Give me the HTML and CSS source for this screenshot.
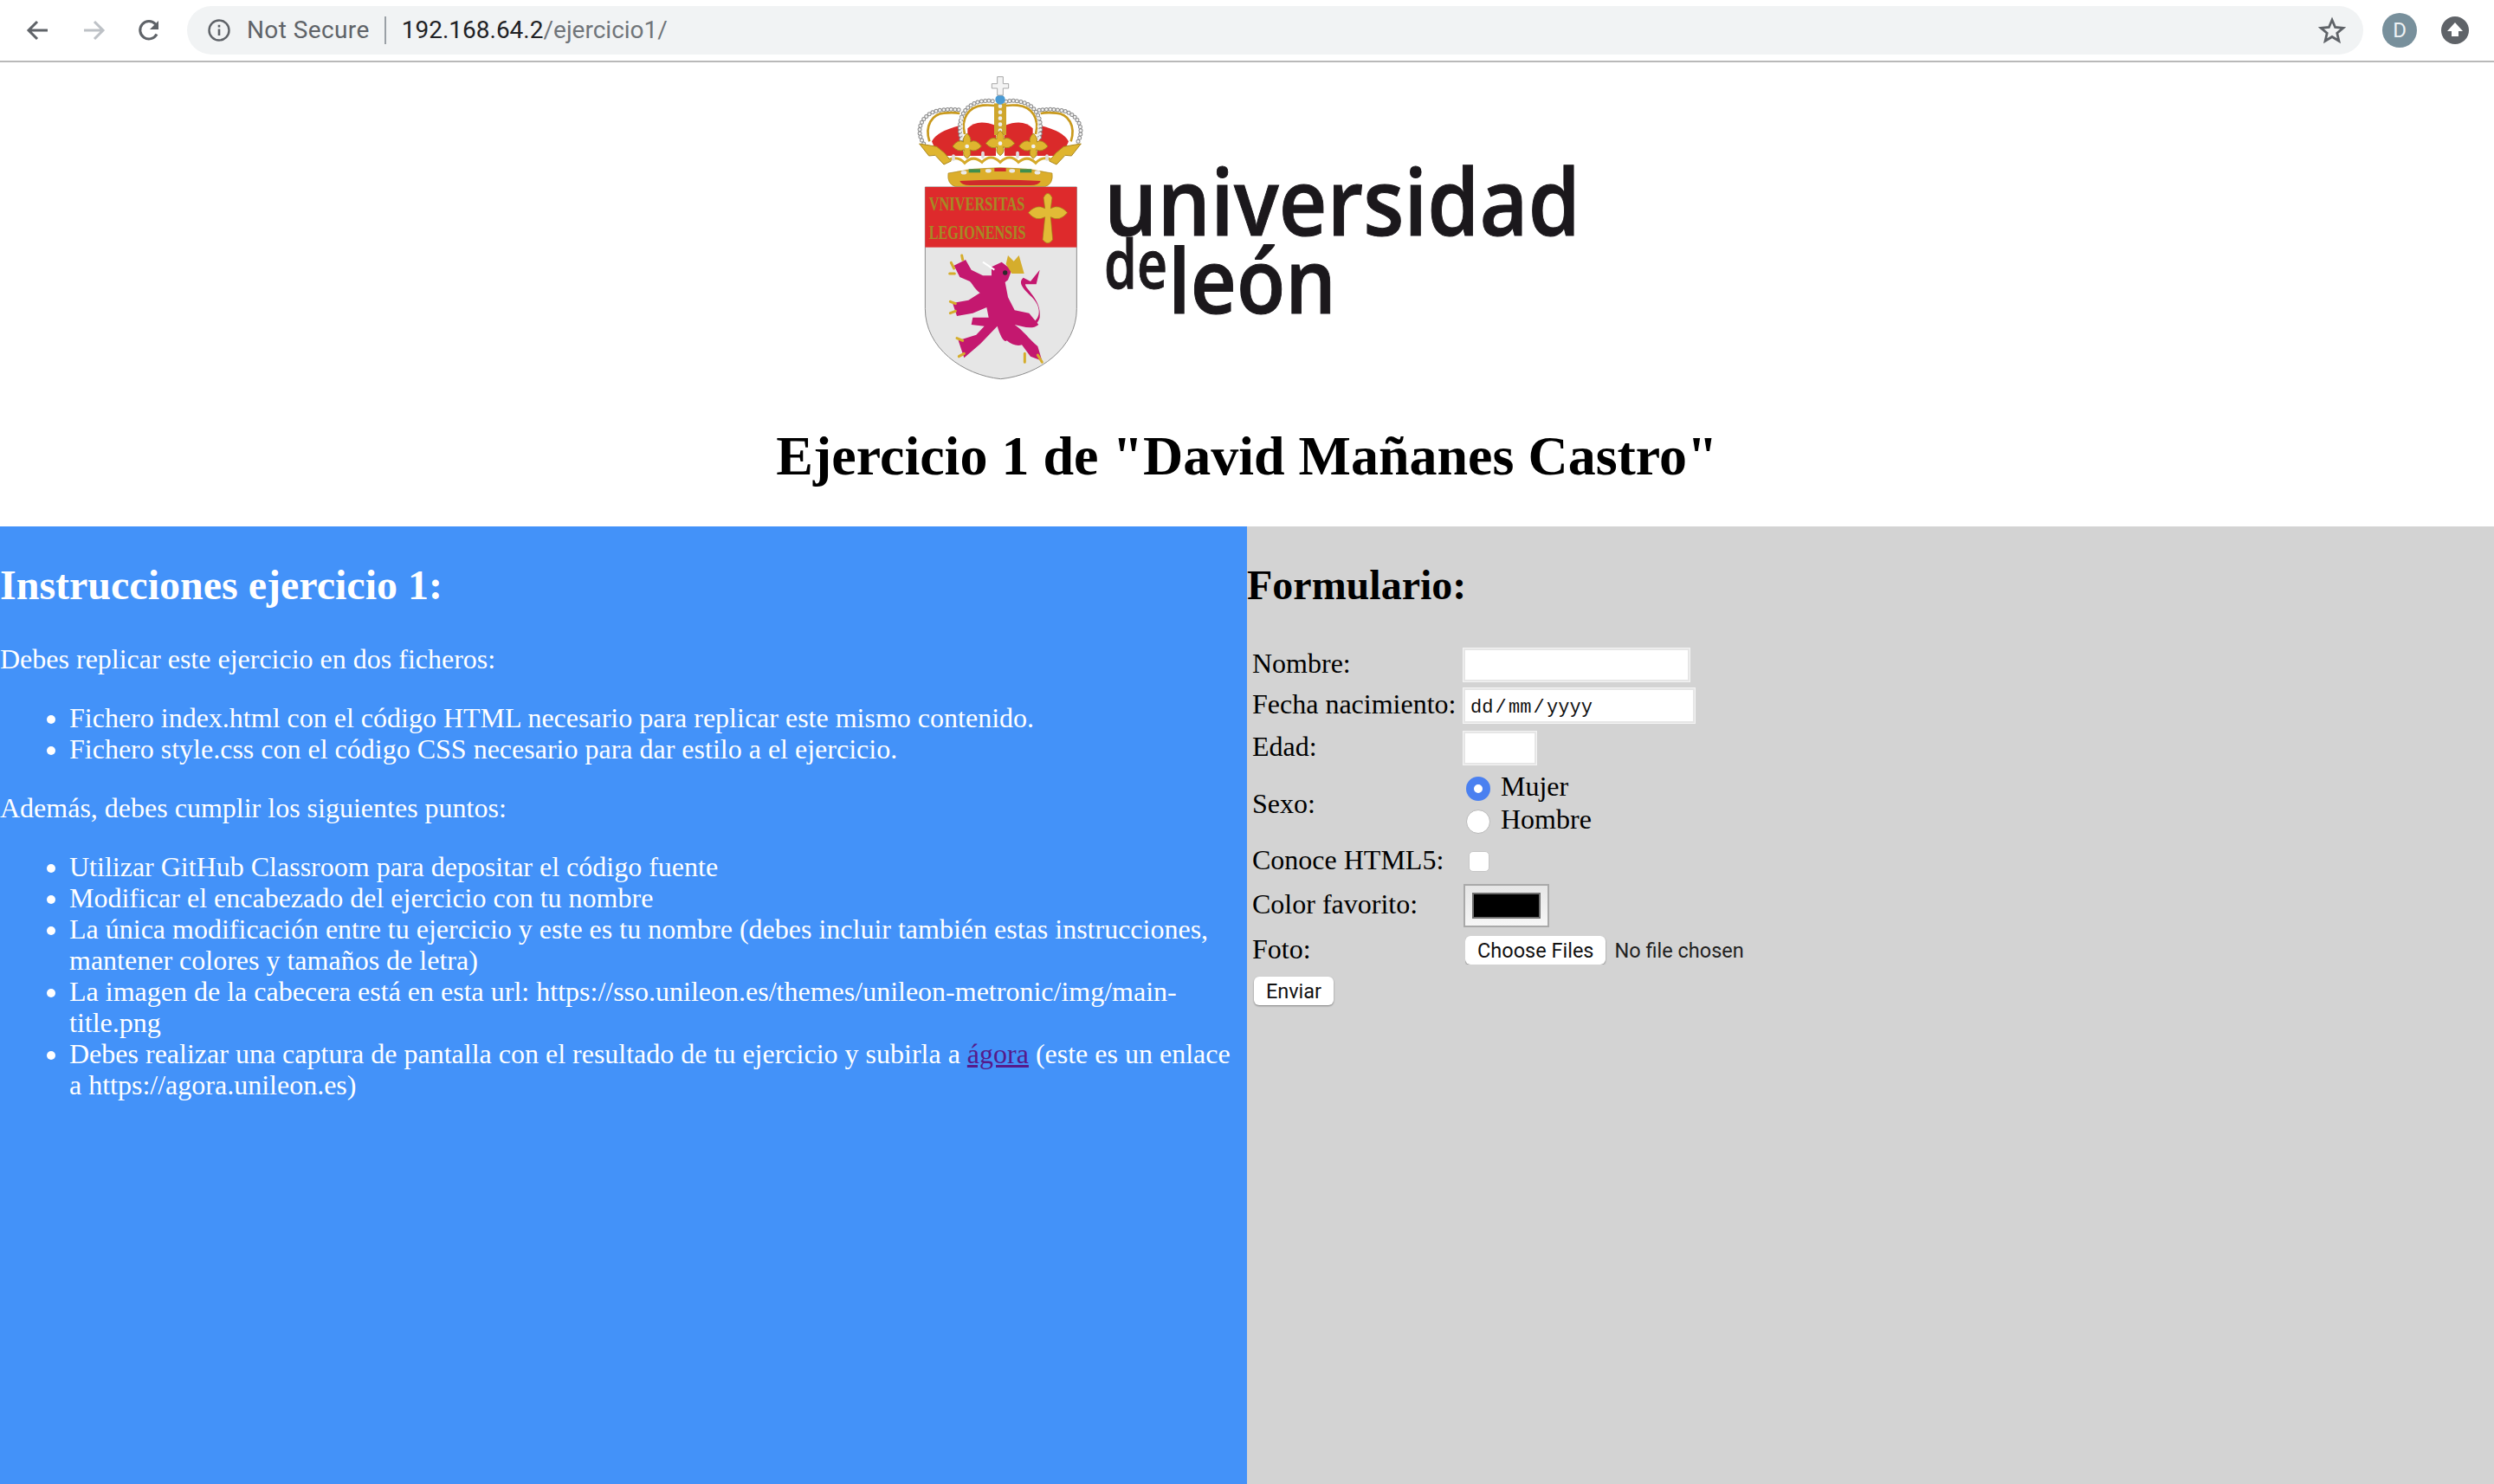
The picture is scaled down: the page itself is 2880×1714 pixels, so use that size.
FILE: index.html
```html
<!DOCTYPE html>
<html lang="es">
<head>
    <meta charset="UTF-8">
    <meta name="viewport" content="width=device-width, initial-scale=1.0">
    <title>Ejercicio 1</title>
    <link rel="stylesheet" href="styles.css">
</head>
<body>
    <div class="toolbar">
        <svg class="navIcon" viewBox="0 0 32 32"><path d="M27 16H6M15 6 5 16l10 10" fill="none" stroke="#5f6368" stroke-width="3"/></svg>
        <svg class="navIcon" viewBox="0 0 32 32"><path d="M5 16h21M17 6l10 10-10 10" fill="none" stroke="#bdc1c6" stroke-width="3"/></svg>
        <svg class="navIcon" viewBox="0 0 32 32"><path d="M25 20.5A10.2 10.2 0 1 1 23.6 9" fill="none" stroke="#5f6368" stroke-width="3"/><path d="M27 5v10H17z" fill="#5f6368"/></svg>
        <div class="addressBar">
            <svg class="infoIcon" viewBox="0 0 28 28"><circle cx="14" cy="14" r="11.5" fill="none" stroke="#5f6368" stroke-width="2.4"/><path d="M12.7 12.5h2.6V20h-2.6zM12.7 7.8h2.6v2.6h-2.6z" fill="#5f6368"/></svg>
            <span class="secure">Not Secure</span>
            <span class="urlText">192.168.64.2<span class="urlPath">/ejercicio1/</span></span>
            <svg class="starIcon" viewBox="0 0 32 32"><path d="m16 4 3.6 8.5 9.2.8-7 6 2.1 9L16 23.500l-7.900 4.800 2.100-9-7-6 9.200-.8z" fill="none" stroke="#5f6368" stroke-width="2.8"/></svg>
        </div>
        <span class="avatar">D</span>
        <svg class="updateIcon" viewBox="0 0 32 32"><circle cx="16" cy="16" r="16" fill="#5f6368"/><path d="m16 7 9 10h-5v6h-8v-6H7z" fill="#fff"/></svg>
    </div>

    <header class="top">
        <svg class="logo" viewBox="1050 80 790 370" role="img" aria-label="Universidad de León">
            <defs>
                <g id="fleur">
                    <path d="M0-45Q16-30 12-15Q30-27 50 0Q30 22 10 12Q18 30 0 42Q-18 30-10 12Q-30 22-50 0Q-30-27-12-15Q-16-30 0-45Z" fill="#dfb52f" stroke="#a9861d" stroke-width="3"/>
                    <circle r="7" fill="#f1f1f1"/>
                </g>
                <path id="pearlArcs" d="M80 258C45 205 80 150 135 142C165 138 190 138 210 142M210 242C195 180 215 125 275 112C295 108 310 108 325 112M365 112C380 108 395 108 415 112C475 125 495 180 480 242M480 142C500 138 525 138 555 142C610 150 645 205 610 258"/>
            </defs>
            <g transform="translate(1040 80) scale(.33333)">
                <!-- crown: red cap between the arches -->
                <path d="M108 250Q125 215 205 195L218 300H130Z" fill="#da2a2a"/>
                <path d="M232 205Q265 170 330 195V300H232Z" fill="#da2a2a"/>
                <path d="M360 195Q425 170 458 205V300H360Z" fill="#da2a2a"/>
                <path d="M582 250Q565 215 485 195L472 300H560Z" fill="#da2a2a"/>
                <use href="#pearlArcs" fill="none" stroke="#8d8d8d" stroke-width="15" stroke-linecap="round" stroke-dasharray="0 13"/>
                <use href="#pearlArcs" fill="none" stroke="#f4f4f4" stroke-width="9" stroke-linecap="round" stroke-dasharray="0 13"/>
                <path d="M100 250C82 195 110 155 150 152C170 150 190 150 205 153M222 225C208 170 235 130 285 125C300 124 312 124 325 126M365 126C378 124 390 124 405 125C455 130 482 170 468 225M485 153C500 150 520 150 540 152C580 155 608 195 590 250" fill="none" stroke="#c99a1d" stroke-width="8"/>
                <rect x="324" y="118" width="42" height="110" fill="#cfa62c"/>
                <path d="M345 128V215" stroke="#ececec" stroke-width="14" stroke-linecap="round" stroke-dasharray="0 21" fill="none"/>
                <path d="M212 170V252M478 170V252" stroke="#ececec" stroke-width="10" stroke-linecap="round" stroke-dasharray="0 14" fill="none"/>
                <!-- rim: outer leaves and scallops -->
                <path d="M65 258 125 268 152 290 175 318 150 330 120 298 98 300Z" fill="#dfb52f" stroke="#a9861d" stroke-width="3"/>
                <path d="M625 258 565 268 538 290 515 318 540 330 570 298 592 300Z" fill="#dfb52f" stroke="#a9861d" stroke-width="3"/>
                <path d="M170 312Q200 300 222 325Q250 295 282 322Q312 290 345 322Q378 290 408 322Q440 295 468 325Q490 300 520 312" fill="none" stroke="#d5aa2a" stroke-width="9"/>
                <path d="M183 300V312M285 290V304M405 290V304M507 300V312" stroke="#dedede" stroke-width="11" stroke-linecap="round" fill="none"/>
                <use href="#fleur" x="230" y="267"/>
                <use href="#fleur" x="345" y="257"/>
                <use href="#fleur" x="460" y="267"/>
                <path d="M165 360Q345 322 525 360Q530 398 500 407H190Q160 398 165 360Z" fill="#dcae2b" stroke="#a9861d" stroke-width="2"/>
                <rect x="236" y="346" width="40" height="12" fill="#3f8f4d"/>
                <rect x="325" y="342" width="40" height="12" fill="#cf2b2b"/>
                <rect x="414" y="346" width="40" height="12" fill="#3f8f4d"/>
                <path d="M215 358h8M300 352h8M382 352h8M470 358h8" stroke="#eaeaea" stroke-width="13" stroke-linecap="round" fill="none"/>
                <path d="M205 387Q345 378 485 387Q480 402 450 402H240Q210 402 205 387Z" fill="#cf2b2b"/>
                <circle cx="345" cy="105" r="17" fill="#4a9bd4"/>
                <path d="M335 90V66H316V50H335V26H355V50H374V66H355V90Z" fill="#f4f4f4" stroke="#a7a7a7" stroke-width="3"/>
                <!-- shield -->
                <path d="M85 408H610V830C610 965 480 1060 347 1073C215 1060 85 965 85 830Z" fill="#e6e6e6" stroke="#8c8c8c" stroke-width="3"/>
                <rect x="85" y="408" width="525" height="209" fill="#de2a2c"/>
                <text class="shieldText" x="98" y="488" textLength="332" lengthAdjust="spacingAndGlyphs">VNIVERSITAS</text>
                <text class="shieldText" x="98" y="588" textLength="336" lengthAdjust="spacingAndGlyphs">LEGIONENSIS</text>
                <path d="M495 445Q510 415 525 445L520 482Q550 465 578 497Q550 530 520 512L527 590Q510 615 492 590L500 512Q470 530 442 497Q470 465 500 482Z" fill="#e2bb36" stroke="#9b7a18" stroke-width="2"/>
                <!-- lion -->
                <path d="M315 685 350 668 385 695 372 730 362 738 372 790 395 835 445 845 478 885C455 905 420 890 395 885 425 905 445 935 475 960L490 1010 450 995 420 955C405 960 385 955 368 940 360 950 345 925 335 890 310 915 285 945 255 970L220 1000 200 940 262 920 290 890 245 885 250 860 305 860 298 825 250 845 195 855 180 810 235 800 275 775C255 760 250 745 240 735L205 720 185 680 225 660 245 695 285 715 315 715Z" fill="#c4186f"/>
                <path d="M455 880C490 860 485 820 455 790C425 760 405 740 425 722L450 735 482 695 470 745 432 745C430 760 490 800 482 860 475 885 455 895 440 880Z" fill="#c4186f"/>
                <path d="M365 675 372 645 392 665 410 645 428 708 385 708Z" fill="#d5ad2c"/>
                <path d="M285 668 325 695" stroke="#fff" stroke-width="6" fill="none"/>
                <circle cx="362" cy="705" r="8" fill="#2b2b2b"/>
                <path d="M185 690 175 670M187 708 170 708M190 812 172 805M190 838 172 845M215 940 195 932M220 985 202 995M430 985 430 1015M475 990 490 1015M215 660 212 645" stroke="#d5ad2c" stroke-width="9" stroke-linecap="round" fill="none"/>
            </g>
            <g class="logoWord">
                <text x="1275" y="272" font-size="107" textLength="550" lengthAdjust="spacingAndGlyphs">universidad</text>
                <text x="1275" y="333" font-size="78" textLength="73" lengthAdjust="spacingAndGlyphs">de</text>
                <text x="1349" y="362" font-size="104" textLength="194" lengthAdjust="spacingAndGlyphs">león</text>
            </g>
        </svg>
        <h1>Ejercicio 1 de "David Mañanes Castro"</h1>
    </header>

    <main class="content">
        <section class="instructions">
            <h2>Instrucciones ejercicio 1:</h2>
            <p>Debes replicar este ejercicio en dos ficheros:</p>
            <ul>
                <li>Fichero index.html con el código HTML necesario para replicar este mismo contenido.</li>
                <li>Fichero style.css con el código CSS necesario para dar estilo a el ejercicio.</li>
            </ul>
            <p>Además, debes cumplir los siguientes puntos:</p>
            <ul>
                <li>Utilizar GitHub Classroom para depositar el código fuente</li>
                <li>Modificar el encabezado del ejercicio con tu nombre</li>
                <li>La única modificación entre tu ejercicio y este es tu nombre (debes incluir también estas instrucciones, mantener colores y tamaños de letra)</li>
                <li>La imagen de la cabecera está en esta url: https://sso.unileon.es/themes/unileon-metronic/img/main-title.png</li>
                <li>Debes realizar una captura de pantalla con el resultado de tu ejercicio y subirla a <a href="#">ágora</a> (este es un enlace a https://agora.unileon.es)</li>
            </ul>
        </section>
        <section class="formPanel">
            <h2>Formulario:</h2>
            <form>
                <table>
                    <tr><td class="labelCell">Nombre:</td><td><input class="field nameField" type="text"></td></tr>
                    <tr><td class="labelCell">Fecha nacimiento:</td><td><input class="field dateField" type="text" value="dd / mm / yyyy"></td></tr>
                    <tr class="rowAge"><td class="labelCell">Edad:</td><td><input class="field ageField" type="text"></td></tr>
                    <tr>
                        <td class="labelCell">Sexo:</td>
                        <td>
                            <label class="radioLine"><input class="radio" type="radio" name="sexo" checked><span class="radioText">Mujer</span></label>
                            <label class="radioLine"><input class="radio" type="radio" name="sexo"><span class="radioText">Hombre</span></label>
                        </td>
                    </tr>
                    <tr class="rowFixed"><td class="labelCell">Conoce HTML5:</td><td><input class="check" type="checkbox"></td></tr>
                    <tr><td class="labelCell">Color favorito:</td><td><input class="colorField" type="color" value="#000000"></td></tr>
                    <tr class="rowFixed"><td class="labelCell">Foto:</td><td><input class="fileField" type="file" multiple></td></tr>
                    <tr class="rowFixed"><td colspan="2"><button class="sendButton" type="button">Enviar</button></td></tr>
                </table>
            </form>
        </section>
    </main>
</body>
</html>
```

FILE: styles.css
```css
body {
    margin: 0;
    min-height: 100vh;
    display: flex;
    flex-direction: column;
    font-family: "Liberation Serif", serif;
    font-size: 32px;
    line-height: 36px;
    background: #fff;
    color: #000;
}

.toolbar {
    flex: none;
    height: 70px;
    display: flex;
    align-items: center;
    border-bottom: 2px solid #b9b9b9;
    padding-left: 28px;
}

.navIcon {
    width: 32px;
    height: 32px;
    margin-right: 32px;
    flex: none;
}

.addressBar {
    width: 2513px;
    height: 56px;
    margin-left: -4px;
    box-sizing: border-box;
    display: flex;
    align-items: center;
    background: #f1f3f4;
    border-radius: 28px;
    padding-left: 23px;
    font-family: Roboto, sans-serif;
    font-size: 28px;
}

.infoIcon {
    width: 28px;
    height: 28px;
    margin-right: 18px;
}

.secure {
    color: #5f6368;
    padding-right: 17px;
    border-right: 2px solid #9aa0a6;
    line-height: 32px;
    letter-spacing: .4px;
}

.urlText {
    margin-left: 18px;
    color: #202124;
}

.urlPath {
    color: #70757a;
}

.starIcon {
    width: 32px;
    height: 32px;
    margin-left: auto;
    margin-right: 20px;
}

.avatar {
    width: 40px;
    height: 40px;
    margin-left: 22px;
    border-radius: 50%;
    background: #78909c;
    color: #eef2f4;
    font-family: Roboto, sans-serif;
    font-size: 24px;
    line-height: 40px;
    text-align: center;
}

.updateIcon {
    width: 32px;
    height: 32px;
    margin-left: 28px;
}

.top {
    flex: none;
    height: 536px;
    text-align: center;
}

.logo {
    display: block;
    width: 790px;
    height: 370px;
    margin: 8px auto 0 1050px;
}

.shieldText {
    font-family: "Liberation Serif", serif;
    font-size: 68px;
    font-weight: 700;
    fill: #a58a24;
}

.logoWord {
    font-family: "Open Sans", sans-serif;
    font-weight: 600;
    fill: #1b181c;
    stroke: #1b181c;
    stroke-width: 1px;
}

h1 {
    font-size: 64px;
    line-height: 72px;
    margin: 41px 0 0;
}

.content {
    flex: 1;
    display: grid;
    grid-template-columns: 1fr 1fr;
}

h2 {
    font-size: 48px;
    line-height: 54px;
    margin: 41px 0 40px;
}

.instructions {
    background: #4392f9;
    color: #fff;
}

.instructions p {
    margin: 32px 0;
}

.instructions ul {
    margin: 32px 0;
    padding-left: 80px;
}

.instructions a {
    color: #551a8b;
}

.formPanel {
    background: #d3d3d3;
}

form {
    margin-top: 1px;
}

table {
    border-spacing: 4px;
}

td {
    padding: 2px;
}

.labelCell {
    width: 236px;
    padding: 0 2px 4px;
}

.rowAge td {
    height: 41px;
}

.rowFixed td {
    height: 37px;
}

.field {
    display: block;
    box-sizing: border-box;
    height: 38px;
    padding: 0 6px;
    background: #fff;
    border: 2px solid #e6e6e6;
    outline: 1px solid #f4f4f4;
    border-radius: 0;
}

.nameField {
    width: 261px;
}

.dateField {
    width: 267px;
    height: 40px;
    padding-top: 4px;
    font-family: "Liberation Mono", monospace;
    font-size: 22px;
    word-spacing: -11px;
    color: #111;
}

.ageField {
    width: 84px;
}

.radioLine {
    display: flex;
    align-items: center;
    gap: 12px;
    height: 38px;
    padding-left: 3px;
}

.radioText {
    padding-bottom: 6px;
}

.radio {
    appearance: none;
    width: 28px;
    height: 28px;
    margin: 0;
    border-radius: 50%;
    background: #fff;
    border: 1px solid #b9b9b9;
}

.radio:checked {
    border: 9px solid #4a80f0;
}

.check {
    appearance: none;
    display: block;
    width: 24px;
    height: 24px;
    margin: 0 0 0 6px;
    background: #fff;
    border: 1px solid #c6c6c6;
    border-radius: 5px;
}

.colorField {
    appearance: none;
    display: block;
    box-sizing: border-box;
    width: 99px;
    height: 50px;
    padding: 8px;
    border: 2px solid #a9a9a9;
    background: linear-gradient(#e6e6e6, #f6f6f6);
}

.colorField::-webkit-color-swatch-wrapper {
    padding: 0;
}

.colorField::-webkit-color-swatch {
    border: 2px solid #6e6e6e;
    border-radius: 0;
}

.fileField {
    display: block;
    margin-left: 2px;
    font-family: Roboto, sans-serif;
    font-size: 23.5px;
    color: #222;
}

.fileField::file-selector-button {
    height: 33px;
    margin-right: 10px;
    padding: 0 14px;
    font: inherit;
    color: #111;
    background: #fff;
    border: 0;
    border-radius: 6px;
    box-shadow: 0 1px 2px rgba(0, 0, 0, .4);
}

.sendButton {
    display: block;
    width: 92px;
    height: 33px;
    margin: 4px 0 0 2px;
    padding: 0;
    font-family: Roboto, sans-serif;
    font-size: 23.5px;
    color: #111;
    background: #fff;
    border: 0;
    border-radius: 6px;
    box-shadow: 0 1px 2px rgba(0, 0, 0, .4);
}
```
